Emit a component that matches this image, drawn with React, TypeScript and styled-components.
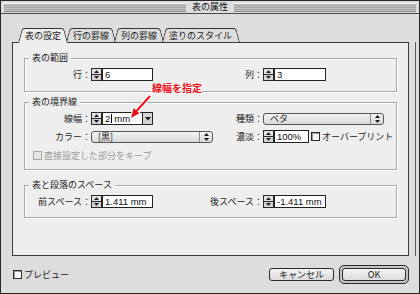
import React from 'react';
import styled, { createGlobalStyle } from 'styled-components';

const GlobalStyle = createGlobalStyle`
  html, body { margin: 0; padding: 0; background: #dddddd; }
  body {
    font-family: "Noto Sans CJK JP", "Noto Sans", sans-serif;
    font-size: 9px;
    color: #1c1c1c;
  }
  #root { width: 420px; height: 294px; }
`;

const Window = styled.div`
  position: relative;
  width: 420px;
  height: 294px;
  box-sizing: border-box;
  border: 1px solid #262626;
  background: #dddddd;
  display: flex;
  flex-direction: column;
  overflow: hidden;
`;

const TitleBar = styled.div`
  height: 12px;
  border-bottom: 1px solid #4a4a4a;
  background: #dedede;
  display: flex;
  align-items: center;
  gap: 4px;
  padding: 0 3px 0 3px;
`;

const Stripes = styled.div`
  flex: 1;
  height: 7px;
  border-top: 1px solid #f6f6f6;
  border-bottom: 1px solid #8a8a8a;
  background: repeating-linear-gradient(to bottom, #bdbdbd 0 1px, #a9a9a9 1px 2px);
`;

const Title = styled.span`
  font-size: 9px;
  line-height: 12px;
  color: #111;
  padding: 0 2px;
`;

const Body = styled.div`
  display: flex;
  flex-direction: column;
  padding: 14px 10px 0 11px;
`;

const TabRow = styled.div`
  display: flex;
  height: 14px;
  padding-left: 6px;
`;

const Tab = styled.div<{ $active?: boolean }>`
  position: relative;
  z-index: ${p => (p.$active ? 3 : 1)};
  height: 14px;
  padding: 1px 7px 0;
  box-sizing: border-box;
  margin-right: -2px;
  display: flex;
  align-items: center;
  justify-content: center;
  font-size: 9px;
  line-height: 12px;
  white-space: nowrap;
  &::before,
  &::after {
    content: '';
    position: absolute;
    top: 0;
    bottom: ${p => (p.$active ? '-1px' : '0')};
    background: ${p => (p.$active ? '#eeeeee' : '#dddddd')};
    border-top: 1px solid #333;
    z-index: -1;
    transform-origin: bottom;
  }
  &::before {
    left: 0;
    right: 50%;
    margin-right: -1px;
    border-left: 1px solid #333;
    border-top-left-radius: 3px;
    transform: skewX(-15deg);
  }
  &::after {
    right: 0;
    left: 50%;
    border-right: 1px solid #333;
    border-top-right-radius: 3px;
    transform: skewX(15deg);
  }
`;

const Panel = styled.div`
  box-sizing: border-box;
  height: 214px;
  background: #eeeeee;
  border: 1px solid #3a3a3a;
  padding: 10px 11px 0 11px;
  box-shadow: 6px 0 0 #dddddd, 7px 0 0 #5a5a5a;
  display: flex;
  flex-direction: column;
`;

const Group = styled.fieldset<{ $mt?: number; $pb?: number }>`
  margin: ${p => p.$mt ?? 0}px 0 0 0;
  padding: 5px 0 ${p => p.$pb ?? 10}px 0;
  border: 1px solid #a9a9a9;
  box-shadow: inset 1px 1px 0 #ffffff, 1px 1px 0 #ffffff;
  min-width: 0;
`;

const Legend = styled.legend`
  margin-left: 4px;
  padding: 0 3px;
  font-size: 9px;
  line-height: 10px;
  background: #eeeeee;
`;

const Row = styled.div<{ $mt?: number }>`
  display: grid;
  grid-template-columns: 188px 1fr;
  align-items: center;
  height: 13px;
  margin-top: ${p => p.$mt ?? 0}px;
`;

const Field = styled.div`
  display: flex;
  align-items: center;
  height: 13px;
`;

const Label = styled.span<{ $w: number }>`
  flex: none;
  width: ${p => p.$w}px;
  display: flex;
  justify-content: flex-end;
  white-space: nowrap;
  font-size: 9px;
  line-height: 13px;
`;

const TextBox = styled.div<{ $w: number }>`
  box-sizing: border-box;
  width: ${p => p.$w}px;
  height: 13px;
  border: 1px solid #222;
  background: #ffffff;
  display: flex;
  align-items: center;
  padding-left: 2px;
  font-family: "Liberation Sans", Arial, sans-serif;
  font-size: 9.5px;
  line-height: 11px;
  color: #111;
  white-space: nowrap;
`;

const Caret = styled.span`
  display: inline-block;
  width: 1px;
  height: 9px;
  background: #000;
  margin: 0 2px 0 1px;
`;

const DropButton = styled.div`
  box-sizing: border-box;
  width: 10px;
  height: 13px;
  border: 1px solid #222;
  border-left: none;
  background: #d4d4d4;
  display: flex;
  align-items: center;
  justify-content: center;
`;

const Popup = styled.div<{ $w: number }>`
  box-sizing: border-box;
  width: ${p => p.$w}px;
  height: 12px;
  border: 1px solid #555;
  border-radius: 3px;
  background: linear-gradient(#f3f3f3, #d9d9d9);
  display: flex;
  align-items: stretch;
`;

const PopupText = styled.span`
  flex: 1;
  padding-left: 6px;
  font-size: 9px;
  line-height: 10px;
  white-space: nowrap;
`;

const PopupArrows = styled.span`
  width: 12px;
  border-left: 1px solid #8a8a8a;
  display: flex;
  align-items: center;
  justify-content: center;
`;

const CheckRow = styled.div<{ $mt?: number; $ml?: number }>`
  display: flex;
  align-items: center;
  gap: 2px;
  height: 11px;
  margin-top: ${p => p.$mt ?? 0}px;
  margin-left: ${p => p.$ml ?? 0}px;
`;

const Box = styled.span<{ $disabled?: boolean }>`
  flex: none;
  box-sizing: border-box;
  width: 9px;
  height: 9px;
  border: 1px solid ${p => (p.$disabled ? '#a8a8a8' : '#2a2a2a')};
  background: ${p => (p.$disabled ? '#e6e6e6' : '#f7f7f7')};
  box-shadow: ${p => (p.$disabled ? 'none' : 'inset 1px 1px 0 #9a9a9a')};
`;

const CheckText = styled.span<{ $disabled?: boolean }>`
  font-size: 9px;
  line-height: 11px;
  color: ${p => (p.$disabled ? '#9c9c9c' : '#1c1c1c')};
  white-space: nowrap;
`;

const Footer = styled.div`
  display: flex;
  align-items: center;
  justify-content: space-between;
  height: 19px;
  margin-top: 9px;
  padding-left: 1px;
`;

const Buttons = styled.div`
  display: flex;
  align-items: center;
  gap: 5px;
`;

const Button = styled.div<{ $w?: number }>`
  box-sizing: border-box;
  width: ${p => (p.$w ? `${p.$w}px` : '100%')};
  height: 13px;
  border: 1px solid #2a2a2a;
  border-radius: 3px;
  background: linear-gradient(#f4f4f4, #dcdcdc);
  display: flex;
  align-items: center;
  justify-content: center;
  font-size: 9px;
  line-height: 11px;
`;

const DefaultRing = styled.div`
  box-sizing: border-box;
  width: 70px;
  height: 19px;
  padding: 2px;
  border: 1px solid #2a2a2a;
  border-radius: 5px;
  background: #c4c4c4;
  display: flex;
`;

const Note = styled.div`
  position: absolute;
  left: 151px;
  top: 81px;
  font-size: 10px;
  line-height: 12px;
  font-weight: 700;
  color: #e8121a;
  white-space: nowrap;
  text-shadow: 1px 0 0 #fff, -1px 0 0 #fff, 0 1px 0 #fff, 0 -1px 0 #fff;
`;

const NoteArrow = styled.svg`
  position: absolute;
  left: 124px;
  top: 89px;
`;

const Spinner = () => (
  <svg width="11" height="13" viewBox="0 0 11 13" style={{ flex: 'none', display: 'block' }}>
    <rect x="0.5" y="0.5" width="10" height="12" fill="#d2d2d2" stroke="#2a2a2a" />
    <rect x="1" y="1" width="9" height="5" fill="#e2e2e2" />
    <line x1="1" y1="6.5" x2="10" y2="6.5" stroke="#2a2a2a" />
    <path d="M5.5 2.2 L8 5 L3 5 Z" fill="#1a1a1a" />
    <path d="M3 8 L8 8 L5.5 10.8 Z" fill="#1a1a1a" />
  </svg>
);

const DownTri = () => (
  <svg width="6" height="4" viewBox="0 0 6 4">
    <path d="M0 0 L6 0 L3 3.5 Z" fill="#1a1a1a" />
  </svg>
);

const UpDown = () => (
  <svg width="5" height="8" viewBox="0 0 5 8">
    <path d="M2.5 0 L5 3 L0 3 Z" fill="#1a1a1a" />
    <path d="M0 5 L5 5 L2.5 8 Z" fill="#1a1a1a" />
  </svg>
);

export default function App() {
  return (
    <>
      <GlobalStyle />
      <Window>
        <TitleBar>
          <Stripes />
          <Title>表の属性</Title>
          <Stripes />
        </TitleBar>
        <Body>
          <TabRow>
            <Tab $active>表の設定</Tab>
            <Tab>行の罫線</Tab>
            <Tab>列の罫線</Tab>
            <Tab>塗りのスタイル</Tab>
          </TabRow>
          <Panel>
            <Group $pb={10}>
              <Legend>表の範囲</Legend>
              <Row>
                <Field>
                  <Label $w={66}>行：</Label>
                  <Spinner />
                  <TextBox $w={51}>6</TextBox>
                </Field>
                <Field>
                  <Label $w={50}>列：</Label>
                  <Spinner />
                  <TextBox $w={52}>3</TextBox>
                </Field>
              </Row>
            </Group>

            <Group $mt={5} $pb={8}>
              <Legend>表の境界線</Legend>
              <Row>
                <Field>
                  <Label $w={66}>線幅：</Label>
                  <Spinner />
                  <TextBox $w={41}>
                    2<Caret />mm
                  </TextBox>
                  <DropButton>
                    <DownTri />
                  </DropButton>
                </Field>
                <Field>
                  <Label $w={50}>種類：</Label>
                  <Popup $w={121}>
                    <PopupText>ベタ</PopupText>
                    <PopupArrows>
                      <UpDown />
                    </PopupArrows>
                  </Popup>
                </Field>
              </Row>
              <Row $mt={5}>
                <Field>
                  <Label $w={66}>カラー：</Label>
                  <Popup $w={122}>
                    <PopupText>[黒]</PopupText>
                    <PopupArrows>
                      <UpDown />
                    </PopupArrows>
                  </Popup>
                </Field>
                <Field>
                  <Label $w={50}>濃淡：</Label>
                  <Spinner />
                  <TextBox $w={35}>100%</TextBox>
                  <CheckRow $ml={2}>
                    <Box />
                    <CheckText>オーバープリント</CheckText>
                  </CheckRow>
                </Field>
              </Row>
              <CheckRow $mt={7} $ml={8}>
                <Box $disabled />
                <CheckText $disabled>直接設定した部分をキープ</CheckText>
              </CheckRow>
            </Group>

            <Group $mt={10} $pb={9}>
              <Legend>表と段落のスペース</Legend>
              <Row>
                <Field>
                  <Label $w={66}>前スペース：</Label>
                  <Spinner />
                  <TextBox $w={51}>1.411 mm</TextBox>
                </Field>
                <Field>
                  <Label $w={50}>後スペース：</Label>
                  <Spinner />
                  <TextBox $w={52}>-1.411 mm</TextBox>
                </Field>
              </Row>
            </Group>
          </Panel>
          <Footer>
            <CheckRow>
              <Box />
              <CheckText>プレビュー</CheckText>
            </CheckRow>
            <Buttons>
              <Button $w={65}>キャンセル</Button>
              <DefaultRing>
                <Button>OK</Button>
              </DefaultRing>
            </Buttons>
          </Footer>
        </Body>
        <Note>線幅を指定</Note>
        <NoteArrow width="32" height="32" viewBox="0 0 32 32">
          <line x1="25" y1="6" x2="11.5" y2="21" stroke="#fff" strokeWidth="4" strokeLinecap="round" />
          <path d="M6 28 L14.5 23.2 L8.6 18 Z" fill="#fff" stroke="#fff" strokeWidth="2" strokeLinejoin="round" />
          <line x1="25" y1="6" x2="11.5" y2="21" stroke="#e8121a" strokeWidth="2" />
          <path d="M6 28 L14.5 23.2 L8.6 18 Z" fill="#e8121a" />
        </NoteArrow>
      </Window>
    </>
  );
}
